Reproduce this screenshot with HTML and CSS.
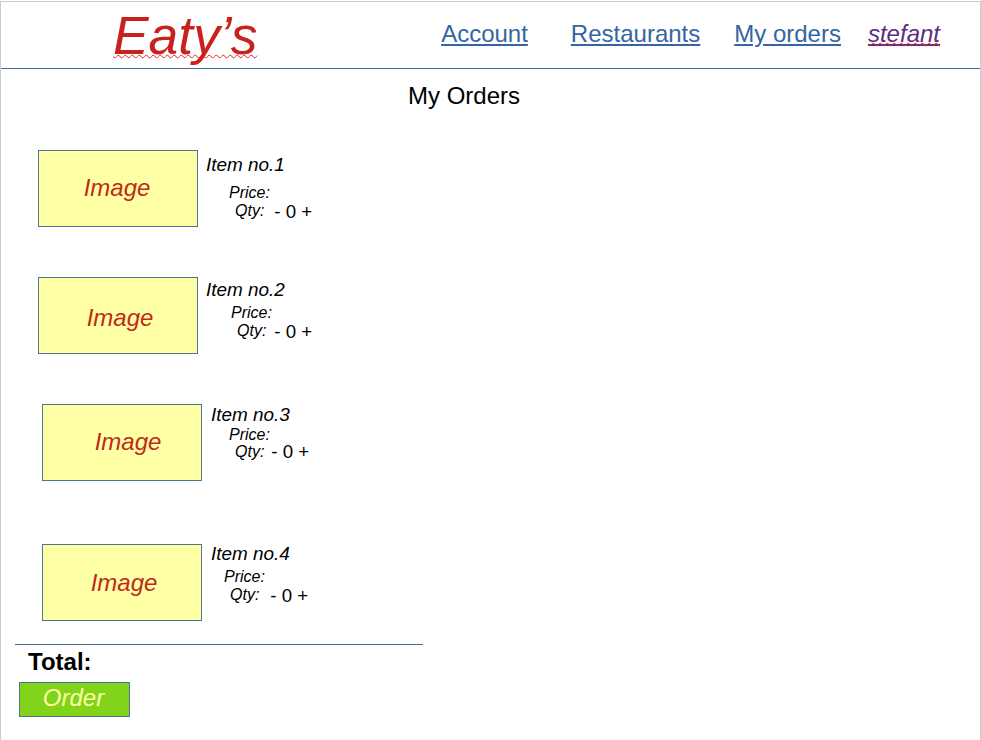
FILE: index.html
```html
<!DOCTYPE html>
<html lang="en">
<head>
    <meta charset="UTF-8">
    <meta name="viewport" content="width=device-width, initial-scale=1.0">
    <title>Eaty's - My Orders</title>
    <link rel="stylesheet" href="styles.css">
</head>
<body>
    <div class="page">
        <header class="header">
            <div class="logo"><span class="squiggle">Eaty’s</span></div>
            <nav class="nav">
                <a href="#" class="nav-link account">Account</a>
                <a href="#" class="nav-link restaurants">Restaurants</a>
                <a href="#" class="nav-link orders">My orders</a>
                <a href="#" class="nav-link user"><span class="squiggle">stefant</span></a>
            </nav>
        </header>

        <h1 class="title">My Orders</h1>

        <div class="item item-1">
            <div class="image">Image</div>
            <div class="details">
                <div class="name">Item no.1</div>
                <div class="price">Price:</div>
                <div class="qty"><span class="qty-label">Qty:</span><span class="qty-value">- 0 +</span></div>
            </div>
        </div>

        <div class="item item-2">
            <div class="image">Image</div>
            <div class="details">
                <div class="name">Item no.2</div>
                <div class="price">Price:</div>
                <div class="qty"><span class="qty-label">Qty:</span><span class="qty-value">- 0 +</span></div>
            </div>
        </div>

        <div class="item item-3">
            <div class="image">Image</div>
            <div class="details">
                <div class="name">Item no.3</div>
                <div class="price">Price:</div>
                <div class="qty"><span class="qty-label">Qty:</span><span class="qty-value">- 0 +</span></div>
            </div>
        </div>

        <div class="item item-4">
            <div class="image">Image</div>
            <div class="details">
                <div class="name">Item no.4</div>
                <div class="price">Price:</div>
                <div class="qty"><span class="qty-label">Qty:</span><span class="qty-value">- 0 +</span></div>
            </div>
        </div>

        <div class="summary">
            <div class="total">Total:</div>
            <button class="order-button">Order</button>
        </div>
    </div>
</body>
</html>
```

FILE: styles.css
```css
body {
    font-family: "Liberation Sans", Arial, sans-serif;
    background-color: white;
    color: black;
    margin: 0;
    padding-top: 1px;
}

.page {
    box-sizing: border-box;
    height: 739px;
    overflow: hidden;
    border: 1px solid #cccccc;
    border-bottom: none;
}

.header {
    display: flex;
    align-items: center;
    justify-content: space-between;
    box-sizing: border-box;
    height: 67px;
    padding: 0 40px 0 112px;
    border-bottom: 1px solid #3f6a92;
}

.logo {
    font-size: 53.4px;
    font-style: italic;
    line-height: 66px;
    color: #c9211e;
    margin-top: 2px;
}

.squiggle {
    text-decoration: underline wavy #e0262a 1px;
    text-decoration-skip-ink: none;
    text-underline-offset: 0;
}

.nav {
    display: flex;
    font-size: 24px;
    line-height: 28px;
    margin-top: -2px;
}

.nav-link {
    color: #3465a4;
}

.restaurants {
    margin-left: 43px;
}

.orders {
    margin-left: 34px;
}

.user {
    margin-left: 27px;
    font-style: italic;
    color: #5c2d7e;
}

.title {
    margin: 13px 0 0 407px;
    font-size: 24px;
    font-weight: normal;
    line-height: 28px;
}

.item {
    display: flex;
    align-items: flex-start;
    gap: 8px;
}

.item-1 {
    margin: 40px 0 0 37px;
}

.item-2 {
    margin: 50px 0 0 37px;
}

.item-3 {
    gap: 9px;
    margin: 50px 0 0 41px;
}

.item-4 {
    gap: 9px;
    margin: 63px 0 0 41px;
}

.image {
    display: flex;
    align-items: center;
    justify-content: center;
    box-sizing: border-box;
    width: 160px;
    height: 77px;
    border: 1px solid #4d7596;
    background-color: #ffffa6;
    color: #bf2a1a;
    font-size: 24px;
    font-style: italic;
}

.item-1 .image {
    padding: 0 2px 2px 0;
}

.item-2 .image {
    padding: 4px 0 0 4px;
}

.item-3 .image {
    padding: 0 0 2px 12px;
}

.item-4 .image {
    padding-left: 4px;
}

.details {
    font-style: italic;
}

.name {
    margin-top: 4px;
    font-size: 18.9px;
    line-height: 22px;
}

.price {
    font-size: 16px;
    line-height: 18px;
    margin-top: 8px;
    margin-left: 23px;
}

.qty {
    display: flex;
    align-items: flex-start;
    font-size: 16px;
    line-height: 18px;
    margin-left: 29px;
}

/* lh 20 puts the numbers 2px under the label baseline */
.qty-value {
    font-size: 18.7px;
    line-height: 20px;
    font-style: normal;
    margin-left: 10px;
}

.item-2 .name {
    margin-top: 2px;
}

.item-2 .price {
    margin-top: 3px;
    margin-left: 25px;
}

.item-2 .qty {
    margin-left: 31px;
}

.item-2 .qty-value {
    margin-left: 8px;
}

.item-3 .name {
    margin-top: 0;
}

.item-3 .price {
    margin-top: 0;
    margin-left: 18px;
}

.item-3 .qty {
    margin-left: 24px;
    margin-top: -1px;
}

.item-3 .qty-value {
    margin-top: -1px;
    margin-left: 7px;
}

.item-4 .name {
    margin-top: -1px;
}

.item-4 .price {
    margin-top: 3px;
    margin-left: 13px;
}

.item-4 .qty {
    margin-left: 19px;
}

.item-4 .qty-value {
    margin-left: 11px;
}

.summary {
    width: 408px;
    margin: 23px 0 0 14px;
    border-top: 1px solid #3f6a92;
}

.total {
    margin: 3px 0 0 13px;
    font-size: 24px;
    font-weight: bold;
    line-height: 28px;
}

.order-button {
    display: block;
    box-sizing: border-box;
    width: 111px;
    height: 35px;
    margin: 6px 0 0 4px;
    padding: 0 2px 4px 0;
    border: 1px solid #4d7596;
    border-radius: 0;
    background-color: #81d41a;
    color: #ffffa6;
    font-family: inherit;
    font-size: 24px;
    font-style: italic;
}
```
